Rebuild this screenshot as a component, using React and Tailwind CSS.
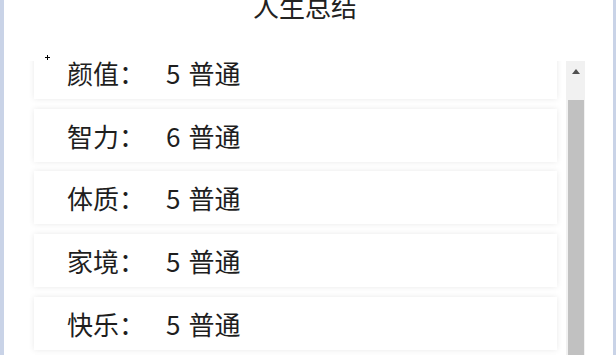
import React from "react";

const rows = [
  { k: "颜值", v: "5 普通" },
  { k: "智力", v: "6 普通" },
  { k: "体质", v: "5 普通" },
  { k: "家境", v: "5 普通" },
  { k: "快乐", v: "5 普通" },
  { k: "寿命", v: "5 普通" },
];

export default function App() {
  return (
    <div
      className="relative flex w-[616px] h-[355px] overflow-hidden bg-white text-[#1e1e1e]"
      style={{ fontFamily: '"Noto Sans CJK SC", "Noto Sans", sans-serif' }}
    >
      <div className="w-[4px] shrink-0 bg-[#c9d3e7]" />
      <div className="flex flex-1 flex-col">
        <div className="h-[61px] shrink-0 overflow-hidden pr-[7px] text-center">
          <div className="mt-[-13px] text-[26px] leading-[38px] text-[#222]">人生总结</div>
        </div>
        <div className="flex flex-1 min-h-0">
          <div className="w-[22px] shrink-0" />
          <div className="flex-1 min-h-0 overflow-hidden pl-[8px] pr-[9px]">
            <div className="mt-[-15px] flex flex-col gap-[9.7px]">
              {rows.map((r) => (
                <div
                  key={r.k}
                  className="flex h-[53px] shrink-0 items-center bg-white pl-[33px] text-[26px] shadow-[0_0_6px_rgba(0,0,0,0.09)]"
                >
                  <span className="w-[99px] shrink-0">{r.k}：</span>
                  <span>
                    {r.v.split(" ")[0]}
                    <span className="ml-[8px]">{r.v.split(" ")[1]}</span>
                  </span>
                </div>
              ))}
            </div>
          </div>
          <div className="flex w-[19px] shrink-0 flex-col bg-[#f1f1f1]">
            <div className="flex h-[20px] items-center justify-center">
              <svg width="8" height="5" viewBox="0 0 8 5">
                <path d="M0 5 L4 0 L8 5 Z" fill="#505050" />
              </svg>
            </div>
            <div className="mt-[19px] ml-[2px] w-[16px] flex-1 bg-[#c1c1c1]" />
          </div>
          <div className="w-[28px] shrink-0" />
        </div>
      </div>
      <div className="w-[3px] shrink-0 bg-[#c9d3e7]" />
      <svg className="absolute left-[45px] top-[55px]" width="5" height="5" viewBox="0 0 5 5">
        <path d="M2.5 0 V5 M0 2.5 H5" stroke="#000" strokeWidth="1" />
      </svg>
    </div>
  );
}
